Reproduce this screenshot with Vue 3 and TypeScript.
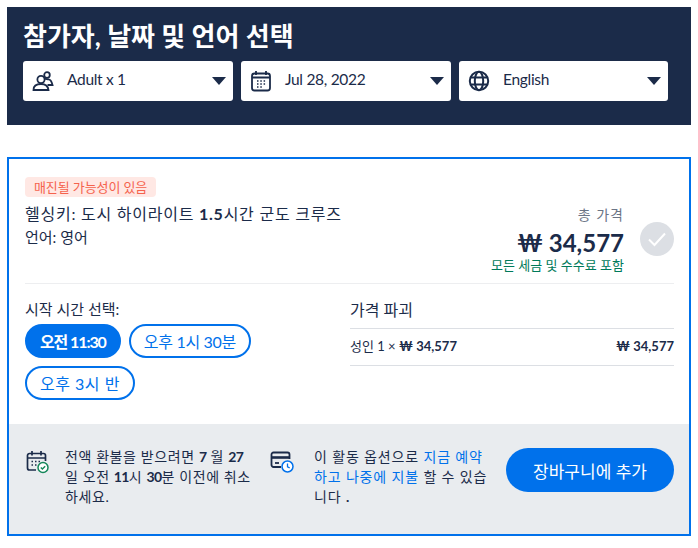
<template>
  <div class="page">
    <section class="head">
      <h1>참가자, 날짜 및 언어 선택</h1>
      <div class="selects">
        <div class="select" v-for="s in selects" :key="s.label">
          <svg v-if="s.icon === 'people'" class="ico" viewBox="0 0 22 22" fill="none" stroke="#1b2b49" stroke-width="1.8">
            <circle cx="9" cy="9.500" r="3.600" />
            <circle cx="15" cy="5" r="2.800" />
            <path d="M1.500 20c0-4 3-6 7.500-6s7 2 7.500 6z" />
            <path d="M12 9c2-.6 3 .4 4.500 .4s3 1.600 4 5.600h-5" />
          </svg>
          <svg v-else-if="s.icon === 'cal'" class="ico" viewBox="0 0 22 22" fill="none" stroke="#1b2b49" stroke-width="1.8">
            <rect x="2" y="3.500" width="18" height="17" rx="2.500" />
            <path d="M6 1v4M16 1v4M2 7.500h18" />
            <path d="M7 11h1.500M10.300 11h1.500M13.600 11h1.500M7 14h1.500M10.300 14h1.500M13.600 14h1.500M7 17h1.500M10.300 17h1.500" stroke-width="1.300" />
          </svg>
          <svg v-else class="ico" viewBox="0 0 22 22" fill="none" stroke="#1b2b49" stroke-width="2">
            <circle cx="11" cy="11" r="9.200" />
            <ellipse cx="11" cy="11" rx="4.200" ry="9.200" />
            <path d="M2.500 7.500h17M2.500 14.500h17" />
          </svg>
          <span class="sel-label">{{ s.label }}</span>
          <span class="caret"></span>
        </div>
      </div>
    </section>

    <section class="card">
      <div class="main">
        <div class="top">
          <div class="info">
            <span class="tag">매진될 가능성이 있음</span>
            <p class="name">헬싱키: 도시 하이라이트 <b>1.5</b>시간 군도 크루즈</p>
            <p class="lang">언어: 영어</p>
          </div>
          <div class="price">
            <div class="price-text">
              <div class="total-label">총 가격</div>
              <div class="total">₩ 34,577</div>
              <div class="tax">모든 세금 및 수수료 포함</div>
            </div>
            <span class="check">
              <svg viewBox="0 0 34 34" width="34" height="34" fill="none" stroke="#fff" stroke-width="2">
                <path d="M9 17.500l5.500 5.500L25 11.500" />
              </svg>
            </span>
          </div>
        </div>

        <div class="bottom">
          <div class="times">
            <div class="times-label">시작 시간 선택:</div>
            <div class="pills">
              <button v-for="(t, i) in times" :key="t" class="pill" :class="{ on: i === 0 }">{{ t }}</button>
            </div>
          </div>
          <div class="breakdown">
            <div class="bd-title">가격 파괴</div>
            <div class="bd-row">
              <span>성인 1 × <b>₩ 34,577</b></span>
              <b>₩ 34,577</b>
            </div>
          </div>
        </div>
      </div>

      <div class="foot">
        <div class="note refund">
          <svg class="note-ico" viewBox="0 0 24 24" fill="none" stroke="#1b2b49" stroke-width="1.700">
            <path d="M11 20H4.500A2 2 0 0 1 2.500 18V5.500a2 2 0 0 1 2-2h14a2 2 0 0 1 2 2V11" />
            <path d="M7 1v4.500M16 1v4.500M2.500 8h18" />
            <path d="M6.500 11.500h1.500M10 11.500h1.500M13.500 11.500h1.500M6.500 15h1.500M10 15h1.500" stroke-width="1.300" />
            <circle cx="18" cy="17.500" r="5" fill="#fff" stroke="#14875a" stroke-width="1.500" />
            <path d="M15.800 17.500l1.600 1.600 2.800-2.900" stroke="#14875a" stroke-width="1.400" />
          </svg>
          <p>전액 환불을 받으려면 <b>7</b> 월 <b>27</b> 일 오전 <b>11</b>시 <b>30</b>분 이전에 취소하세요.</p>
        </div>
        <div class="note later">
          <svg class="note-ico" viewBox="0 0 24 24" fill="none" stroke="#1b2b49" stroke-width="1.800">
            <path d="M11 17H3.500a2 2 0 0 1-2-2V4.500a2 2 0 0 1 2-2h14a2 2 0 0 1 2 2V9" />
            <path d="M1.500 7.500h18" stroke-width="2.600" />
            <path d="M5 13h4" />
            <circle cx="17.500" cy="16.500" r="5.500" fill="#fff" stroke="#0071eb" stroke-width="1.500" />
            <path d="M17.500 13.500v3.300l2.200 1" stroke="#0071eb" stroke-width="1.300" />
          </svg>
          <p>이 활동 옵션으로 <span class="link">지금 예약하고 나중에 지불</span> 할 수 있습니다 <b>.</b></p>
        </div>
        <button class="cart">장바구니에 추가</button>
      </div>
    </section>
  </div>
</template>

<script setup lang="ts">
const selects = [
  { icon: 'people', label: 'Adult x 1' },
  { icon: 'cal', label: 'Jul 28, 2022' },
  { icon: 'globe', label: 'English' },
]

const times = ['오전 11:30', '오후 1시 30분', '오후 3시 반']
</script>

<style>
body {
  margin: 0;
  background: #fff;
}
</style>

<style scoped>
.page {
  width: 698px;
  height: 548px;
  box-sizing: border-box;
  padding: 7px;
  overflow: hidden;
  font-family: Lato, "Noto Sans CJK KR", sans-serif;
  color: #1b2b49;
}

.head {
  background: #1b2b49;
  height: 118px;
  box-sizing: border-box;
  padding: 12px 16px 0;
  margin-bottom: 32px;
}

.head h1 {
  margin: 0 0 8px;
  color: #fff;
  font-size: 26px;
  line-height: 34px;
  font-weight: 700;
}

.selects {
  display: flex;
  gap: 8px;
}

.select {
  width: 210px;
  height: 40px;
  box-sizing: border-box;
  background: #fff;
  border-radius: 3px;
  display: flex;
  align-items: center;
  padding: 0 7px 0 9px;
  font-size: 15.500px;
}

.select:last-child {
  width: 209px;
}

.ico {
  width: 22px;
  height: 22px;
  flex: none;
}

.sel-label {
  margin-left: 13px;
  margin-bottom: 4px;
  flex: 1;
  letter-spacing: -.3px;
}

.caret {
  width: 0;
  height: 0;
  border-left: 7.500px solid transparent;
  border-right: 7.500px solid transparent;
  border-top: 8px solid #1b2b49;
}

.card {
  height: 379px;
  box-sizing: border-box;
  border: 2px solid #0071eb;
  display: flex;
  flex-direction: column;
}

.main {
  flex: 1;
  padding: 18px 15px 0 16px;
}

.top {
  display: flex;
  justify-content: space-between;
  height: 106px;
  border-bottom: 1px solid #edeef0;
}

.tag {
  display: block;
  width: fit-content;
  height: 20px;
  line-height: 20px;
  padding: 0 9px;
  background: #ffe8e4;
  color: #f5624d;
  border-radius: 4px;
  font-size: 13px;
  letter-spacing: -.1px;
}

.name {
  margin: 6px 0 0;
  font-size: 16px;
  line-height: 22px;
  letter-spacing: .75px;
}

.lang {
  margin: 1px 0 0;
  font-size: 15px;
  line-height: 22px;
}

.price {
  display: flex;
  align-items: flex-start;
  gap: 16px;
  padding-top: 28px;
}

.price-text {
  text-align: right;
}

.total-label {
  font-size: 14px;
  line-height: 20px;
  letter-spacing: 1px;
  color: #6b7485;
}

.total {
  font-size: 24px;
  line-height: 30px;
  font-weight: 700;
  margin-top: 3px;
}

.tax {
  font-size: 13px;
  line-height: 16px;
  color: #007a5a;
  margin-top: -1px;
}

.check {
  width: 34px;
  height: 34px;
  margin-top: 17px;
  border-radius: 50%;
  background: #dcdfe4;
  display: block;
}

.check svg {
  display: block;
}

.bottom {
  display: flex;
  padding-top: 14px;
}

.times {
  width: 325px;
}

.times-label {
  font-size: 15px;
  line-height: 22px;
}

.pills {
  display: flex;
  flex-wrap: wrap;
  gap: 8px;
  margin-top: 4px;
  width: 250px;
}

.pill {
  height: 34px;
  box-sizing: border-box;
  padding: 0 13px;
  border: 2px solid #0071eb;
  border-radius: 17px;
  background: #fff;
  color: #0071eb;
  font: inherit;
  font-size: 16px;
  letter-spacing: .5px;
}

.pill:nth-child(2) {
  letter-spacing: -.3px;
}

.pill.on {
  background: #0071eb;
  color: #fff;
  font-weight: 700;
  letter-spacing: -1.1px;
}

.breakdown {
  flex: 1;
}

.bd-title {
  font-size: 16px;
  line-height: 24px;
  padding-bottom: 6px;
  border-bottom: 1px solid #dcdfe4;
}

.bd-row {
  display: flex;
  justify-content: space-between;
  align-items: center;
  height: 37px;
  padding-bottom: 3px;
  box-sizing: border-box;
  font-size: 13px;
  border-bottom: 1px solid #dcdfe4;
}

.foot {
  height: 110px;
  flex: none;
  background: #e9ecef;
  display: flex;
  align-items: flex-start;
  padding: 23px 15px 0 16px;
  box-sizing: border-box;
}

.note {
  display: flex;
  gap: 16px;
  font-size: 14px;
  line-height: 20px;
  letter-spacing: .6px;
}

.note p {
  margin: 0;
  word-break: break-all;
}

.refund {
  width: 245px;
}

.refund b {
  letter-spacing: -.6px;
}

.later {
  width: 235px;
  letter-spacing: .85px;
}

.refund p {
  width: 192px;
}

.later p {
  width: 175px;
  margin-left: 4px;
}

.note-ico {
  width: 24px;
  height: 24px;
  flex: none;
  margin-top: 3px;
}

.link {
  color: #0071eb;
}

.cart {
  margin-left: auto;
  margin-top: 1px;
  width: 168px;
  height: 44px;
  border: none;
  border-radius: 22px;
  background: #0071eb;
  color: #fff;
  font: inherit;
  font-size: 17px;
}
</style>
